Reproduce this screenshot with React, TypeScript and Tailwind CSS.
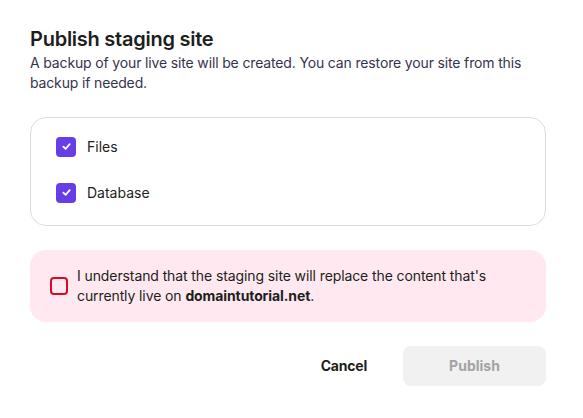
import React from 'react';

const CheckIcon = () => (
  <svg viewBox="0 0 12 12" className="h-[11px] w-[11px]" fill="none">
    <path d="M2.5 6.2 5 8.5 9.5 3.5" stroke="white" strokeWidth="2" strokeLinecap="round" strokeLinejoin="round" />
  </svg>
);

const CheckRow = ({ label }: { label: string }) => (
  <label className="flex items-center gap-[11px]">
    <span className="flex h-5 w-5 items-center justify-center rounded-[4px] bg-[#673de6]">
      <CheckIcon />
    </span>
    <span className="text-[14px] text-[#1d1e20]">{label}</span>
  </label>
);

export default function App() {
  return (
    <div className="min-h-screen bg-white font-['Inter',sans-serif] text-[#1d1e20]">
      <div className="w-[516px] ml-[30px] pt-[26px]">
        <h2 className="text-[20px] leading-[26px] font-semibold tracking-[-0.25px]">Publish staging site</h2>
        <p className="mt-[1px] text-[14px] leading-[20px] tracking-[-0.15px] text-[#36344d]">
          A backup of your live site will be created. You can restore your site from this backup if needed.
        </p>

        <div className="mt-[24px] flex flex-col gap-[25px] rounded-[16px] border border-[#dadce0] px-[25px] pt-[18px] pb-[22px]">
          <CheckRow label="Files" />
          <CheckRow label="Database" />
        </div>

        <div className="mt-[24px] flex items-center gap-[9px] rounded-[16px] bg-[#ffe8ef] px-[20px] py-[16px]">
          <span className="h-[18px] w-[18px] shrink-0 rounded-[4px] border-2 border-[#d10c2c]" />
          <p className="text-[14px] leading-[20px] tracking-[-0.1px] text-[#1d1e20]">
            I understand that the staging site will replace the content that's currently live on{' '}
            <span className="font-bold">domaintutorial.net</span>.
          </p>
        </div>

        <div className="mt-[23px] flex items-center justify-end gap-[20px]">
          <button className="px-[16px] py-[10px] text-[14px] font-bold tracking-[-0.2px] text-[#1d1e20]">Cancel</button>
          <button className="h-[40px] w-[143px] rounded-[8px] bg-[#f1f1f1] text-[14px] font-bold text-[#a3a3a3]">
            Publish
          </button>
        </div>
      </div>
    </div>
  );
}
